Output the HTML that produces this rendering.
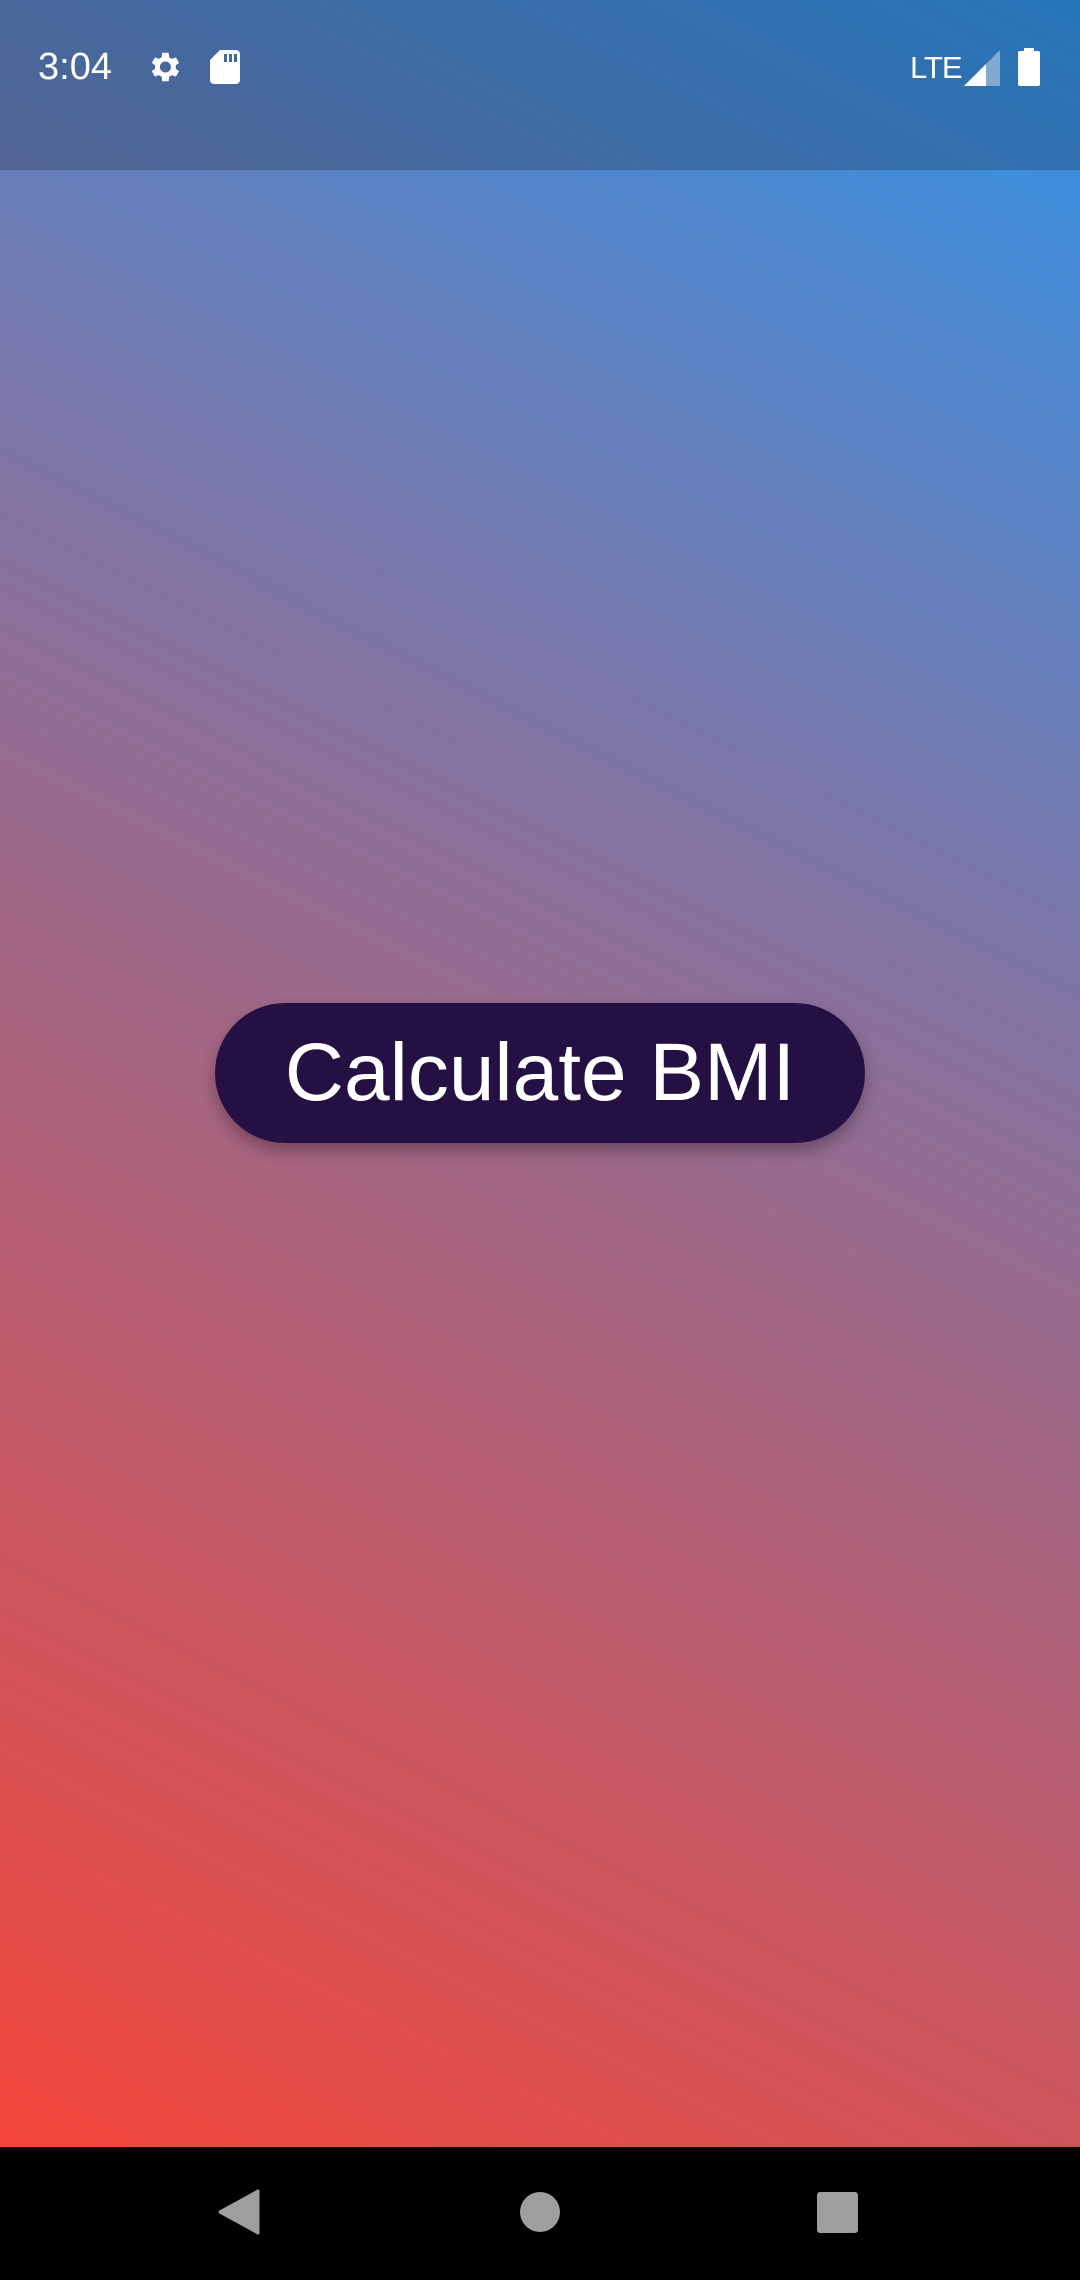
<!DOCTYPE html>
<html><head><style>
body{margin:0;width:1080px;height:2280px;overflow:hidden;font-family:"Liberation Sans",Roboto,sans-serif;position:relative}
.bg{position:absolute;left:0;top:0;width:1080px;height:2147px;background:linear-gradient(26.7deg,#f4473a 0%,#9a6a8c 50%,#2f92e8 100%)}
.sb{position:absolute;left:0;top:0;width:1080px;height:170px;background:rgba(0,0,0,0.2)}
.time{position:absolute;left:38px;top:46px;color:#fff;font-size:38px}
.btn{position:absolute;left:215px;top:1003px;width:650px;height:140px;border-radius:70px;background:#251044;color:#fff;font-size:82px;text-align:center;line-height:140px;box-shadow:0 8px 16px rgba(0,0,0,0.3)}
.nav{position:absolute;left:0;top:2147px;width:1080px;height:133px;background:#000}
</style></head><body>
<div class="bg"></div>
<div class="sb"></div>
<div class="time">3:04</div>
<svg style="position:absolute;left:145px;top:48px" width="38" height="38" viewBox="0 0 24 24"><path fill="#fff" d="M19.4 13a7.5 7.5 0 0 0 0-2l2.1-1.6-2-3.5-2.5 1a7 7 0 0 0-1.7-1L14.9 3h-4l-.4 2.9a7 7 0 0 0-1.7 1l-2.5-1-2 3.5L6.4 11a7.5 7.5 0 0 0 0 2l-2.1 1.6 2 3.5 2.5-1a7 7 0 0 0 1.7 1l.4 2.9h4l.4-2.9a7 7 0 0 0 1.7-1l2.5 1 2-3.5zM12.9 15.5a3.5 3.5 0 1 1 0-7 3.5 3.5 0 0 1 0 7z"/></svg>
<svg style="position:absolute;left:210px;top:50px" width="30" height="34" viewBox="0 0 15 17"><path fill="#fff" d="M5 0h8a2 2 0 0 1 2 2v13a2 2 0 0 1-2 2H2a2 2 0 0 1-2-2V5zM7 2v4h1.5V2zM9.5 2v4H11V2zM12 2v4h1.5V2z"/></svg>
<div style="position:absolute;left:910px;top:50px;color:#fff;font-size:31px;letter-spacing:-1px">LTE</div>
<svg style="position:absolute;left:964px;top:50px" width="36" height="36" viewBox="0 0 36 36"><path fill="rgba(255,255,255,0.4)" d="M36 0V36H0z"/><path fill="#fff" d="M22 14V36H0z"/></svg>
<svg style="position:absolute;left:1018px;top:48px" width="22" height="38" viewBox="0 0 22 38"><rect x="6" y="0" width="10" height="4" fill="#fff"/><rect x="0" y="3" width="22" height="35" rx="2" fill="#fff"/></svg>
<div class="btn">Calculate BMI</div>
<div class="nav">
<svg style="position:absolute;left:218px;top:42px" width="42" height="46" viewBox="0 0 42 46"><path fill="#9e9e9e" d="M40 2V44L2 23z" stroke="#9e9e9e" stroke-width="3" stroke-linejoin="round"/></svg>
<div style="position:absolute;left:520px;top:45px;width:40px;height:40px;border-radius:50%;background:#9e9e9e"></div>
<div style="position:absolute;left:817px;top:45px;width:41px;height:41px;border-radius:3px;background:#9e9e9e"></div>
</div>
</body></html>
